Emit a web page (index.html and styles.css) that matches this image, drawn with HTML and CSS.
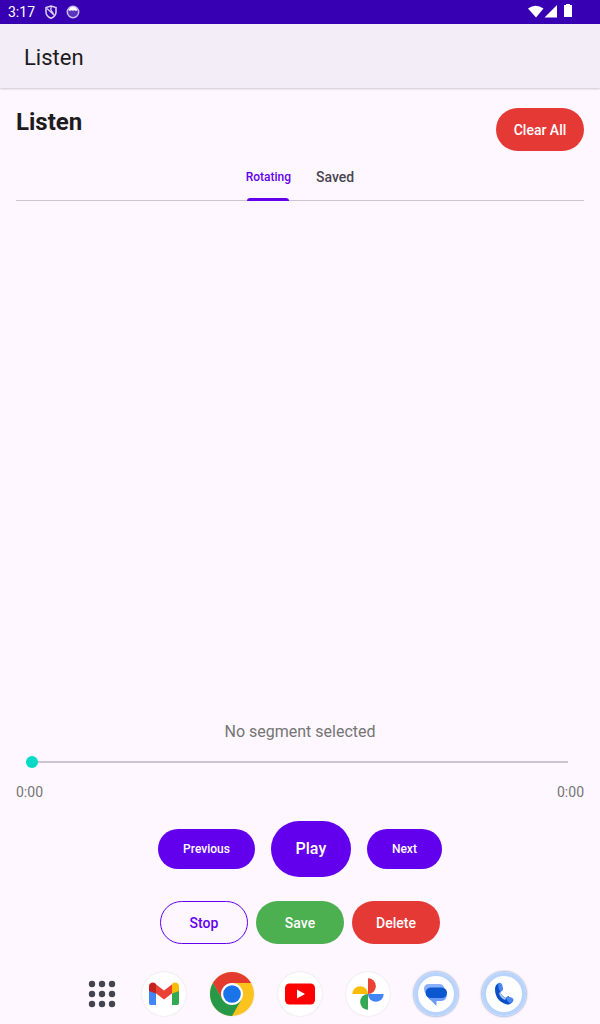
FILE: index.html
```
<!DOCTYPE html>
<html lang="en">
<head>
<meta charset="utf-8">
<meta name="viewport" content="width=device-width, initial-scale=1">
<title>Listen</title>
<link rel="stylesheet" href="styles.css">
</head>
<body>
<div class="status">
  <time class="clock">3:17</time>
  <svg class="status-icon" viewBox="0 0 14 14" aria-hidden="true"><path d="M7 1 12 2.500V7c0 3-2 5-5 6.300C4 12 2 10 2 7V2.500z" fill="none" stroke="#d9cdf2" stroke-width="1.600"/><path d="M3 3.500 10.500 10.500M7.500 2C5 5 8 5.500 9.500 9" fill="none" stroke="#d9cdf2" stroke-width="1.200"/></svg>
  <svg class="status-icon" viewBox="0 0 14 14" aria-hidden="true"><circle cx="7" cy="7" r="5.700" fill="#5a33be" stroke="#cbbcec" stroke-width="1.500"/><path d="M2.500 5C4 .5 10 .5 11.500 5L10 6 8.500 5.300 7 5.700 5 5.300 4 6z" fill="#fff"/></svg>
  <svg class="signals" viewBox="0 0 46 16" aria-hidden="true"><g fill="#fff"><path d="M0 4.500Q7.500-1 15.500 4.500L8 13.500z"/><path d="M29 1v12.500H16.500z"/><path d="M36 1h2V0h4v1h2v12h-8z"/></g></svg>
</div>
<header class="appbar"><span>Listen</span></header>
<main class="content">
  <div class="heading">
    <h1>Listen</h1>
    <button class="btn red" type="button">Clear All</button>
  </div>
  <div class="tabs" role="tablist">
    <button class="tab active" type="button" role="tab" aria-selected="true">Rotating</button>
    <button class="tab" type="button" role="tab" aria-selected="false">Saved</button>
  </div>
  <div class="list" role="tabpanel" aria-label="Rotating"></div>
  <section class="player">
    <p class="segment">No segment selected</p>
    <input class="seek" type="range" min="0" max="100" value="0" aria-label="Playback position">
    <div class="times"><span>0:00</span><span>0:00</span></div>
    <div class="transport">
      <button class="btn small" type="button">Previous</button>
      <button class="btn large" type="button">Play</button>
      <button class="btn small" type="button">Next</button>
    </div>
    <div class="actions">
      <button class="btn outline" type="button">Stop</button>
      <button class="btn green" type="button">Save</button>
      <button class="btn red" type="button">Delete</button>
    </div>
  </section>
</main>
<nav class="dock" aria-label="Apps">
  <button class="app drawer" type="button" aria-label="All apps"><svg viewBox="0 0 32 32"><g fill="#43444f"><circle cx="6" cy="6" r="3.200"/><circle cx="16" cy="6" r="3.200"/><circle cx="26" cy="6" r="3.200"/><circle cx="6" cy="16" r="3.200"/><circle cx="16" cy="16" r="3.200"/><circle cx="26" cy="16" r="3.200"/><circle cx="6" cy="26" r="3.200"/><circle cx="16" cy="26" r="3.200"/><circle cx="26" cy="26" r="3.200"/></g></svg></button>
  <button class="app" type="button" aria-label="Gmail"><svg viewBox="0 0 44 44"><path d="M7 18v13q0 2 2 2h5V20z" fill="#4285f4"/><path d="M30 20v13h5q2 0 2-2V18z" fill="#34a853"/><path d="M13.500 12l8.500 6.500 8.500-6.500v9L22 27.500 13.500 21z" fill="#ea4335"/><path d="M7 19v-5c0-3 4-4.500 6.500-2.500l.5.400V21.500z" fill="#c5221f"/><path d="M37 19v-5c0-3-4-4.500-6.500-2.500l-.5.400V21.500z" fill="#fbbc04"/></svg></button>
  <button class="app" type="button" aria-label="Chrome"><svg viewBox="0 0 44 44"><circle cx="22" cy="22" r="22" fill="#fcc31e"/><path d="M2.950 11A22 22 0 0 1 41.050 11H22L12.500 27.500z" fill="#e33b2e"/><path d="M2.950 11A22 22 0 0 0 22 44L31.500 27.500H12.500z" fill="#279847"/><circle cx="22" cy="22" r="11" fill="#fff"/><circle cx="22" cy="22" r="8.800" fill="#1a73e8"/></svg></button>
  <button class="app" type="button" aria-label="YouTube"><svg viewBox="0 0 44 44"><rect x="7" y="11.500" width="30" height="21" rx="4.500" fill="#f00"/><path d="M19 17.500v9l8-4.500z" fill="#fff"/></svg></button>
  <button class="app" type="button" aria-label="Photos"><svg viewBox="0 0 44 44"><path d="M22 6.300a7.850 7.850 0 0 1 0 15.700z" fill="#ea4335"/><path d="M37.700 22a7.850 7.850 0 0 1-15.700 0z" fill="#4285f4"/><path d="M22 37.700a7.850 7.850 0 0 1 0-15.700z" fill="#34a853"/><path d="M6.300 22a7.850 7.850 0 0 1 15.700 0z" fill="#fbbc04"/></svg></button>
  <button class="app ringed" type="button" aria-label="Messages"><svg viewBox="1 0 44 44"><path d="M34 21q0 8-6 8h-4.500v5l-5.500-5.500q-4-2-4-7z" fill="#6d9bf8"/><path d="M11 17q0-5 5-5h10q5 0 5.500 5v4H13q-2-1-2-4z" fill="#8ab0fc"/><rect x="12.500" y="15.500" width="21.500" height="10.500" rx="5.250" fill="#0b57d0"/></svg></button>
  <button class="app ringed" type="button" aria-label="Phone"><svg viewBox="0 0 44 44"><path d="M13 17Q13 13 16.500 11L21 16.500 18.500 20q1 4 5.500 6l2.500-2L31 29.500Q28 33 25 32.500 13 29 13 17z" fill="#0b4fc4"/><path d="M16.500 11q3-1 4 3l.5 4-2.500 2q-3-4-2-9zM25.500 24.500l4 1q3 1 1.500 4l-3 2q-3-2-4-5.500z" fill="#4a86f7"/><path d="M18.500 20q1 4.500 5.500 6.500l-1 1.500q-5-2-6-7z" fill="#a9c7fa"/></svg></button>
</nav>
</body>
</html>
```
FILE: styles.css
```
* { box-sizing: border-box; }
body {
  margin: 0;
  min-height: 100vh;
  display: flex;
  flex-direction: column;
  background: #fef7ff;
  color: #1d1b20;
  font-family: Roboto, "Noto Sans", sans-serif;
}
h1, p { margin: 0; }
button { border: 0; padding: 0; background: none; font: inherit; color: inherit; }
.status {
  height: 24px;
  padding: 0 26px 0 8px;
  display: flex;
  align-items: center;
  gap: 8px;
  background: #3700b3;
  color: #fff;
}
.clock { font-size: 14px; line-height: 24px; margin-right: 1px; }
.status-icon { width: 14px; height: 14px; }
.signals { width: 46px; height: 16px; margin-left: auto; }
.appbar {
  height: 64px;
  padding: 0 24px;
  display: flex;
  align-items: center;
  background: #f3edf7;
  font-size: 22px;
  line-height: 28px;
  box-shadow: 0 1px 2px #0003;
}
.appbar span { padding-top: 3px; }
.content { flex: 1; padding: 20px 16px 0; display: flex; flex-direction: column; }
.heading { display: flex; justify-content: space-between; align-items: flex-start; }
h1 { font-size: 24px; line-height: 28px; font-weight: 700; }
.btn {
  min-width: 88px;
  height: 43px;
  border-radius: 22px;
  background: #6200ee;
  color: #fff;
  font-size: 14px;
  font-weight: 500;
  line-height: 20px;
}
.red { background: #e53935; }
.green { background: #4caf50; }
.outline { background: transparent; border: 1px solid #6200ee; color: #6200ee; }
.small { min-width: 0; height: 40px; padding: 0 25px; font-size: 12px; }
.large { min-width: 80px; height: 56px; border-radius: 28px; font-size: 16px; }
.tabs {
  height: 50px;
  display: flex;
  justify-content: center;
  gap: 25px;
  border-bottom: 1px solid #cac4d0;
}
.tab {
  position: relative;
  padding-top: 2px;
  font-size: 14px;
  font-weight: 500;
  color: #49454f;
}
.tab.active { font-size: 12px; color: #6200ee; }
.tab.active::after {
  content: "";
  position: absolute;
  left: 1px;
  right: 2px;
  bottom: -1px;
  height: 3px;
  border-radius: 3px 3px 0 0;
  background: #6200ee;
}
.list { flex: 1; }
.segment { text-align: center; font-size: 16px; line-height: 24px; color: #757575; }
.player { display: flex; flex-direction: column; }
.seek {
  appearance: none;
  height: 12px;
  margin: 12px 16px 14px 10px;
  background: linear-gradient(#cac4d0, #cac4d0) center / 100% 2px no-repeat;
}
.seek::-webkit-slider-thumb {
  appearance: none;
  width: 12px;
  height: 12px;
  border-radius: 50%;
  background: #03dac5;
}
.times { display: flex; justify-content: space-between; font-size: 14px; line-height: 20px; color: #757575; }
.transport { display: flex; justify-content: center; align-items: center; gap: 16px; padding: 19px 0 24px; }
.actions { display: flex; justify-content: center; gap: 8px; }
.dock { display: flex; justify-content: center; align-items: center; gap: 24px; padding: 28px 0 8px 12px; }
.app {
  width: 44px;
  height: 44px;
  border-radius: 50%;
  background: #fff;
  box-shadow: 0 0 2px #0002;
}
.app svg { display: block; width: 100%; height: 100%; }
.drawer { width: 32px; height: 32px; background: none; box-shadow: none; }
.ringed { box-shadow: inset 0 0 0 4px #b9d3fb, 0 0 0 1px #b9d3fb, 0 0 2px 1px #0004; }
```
